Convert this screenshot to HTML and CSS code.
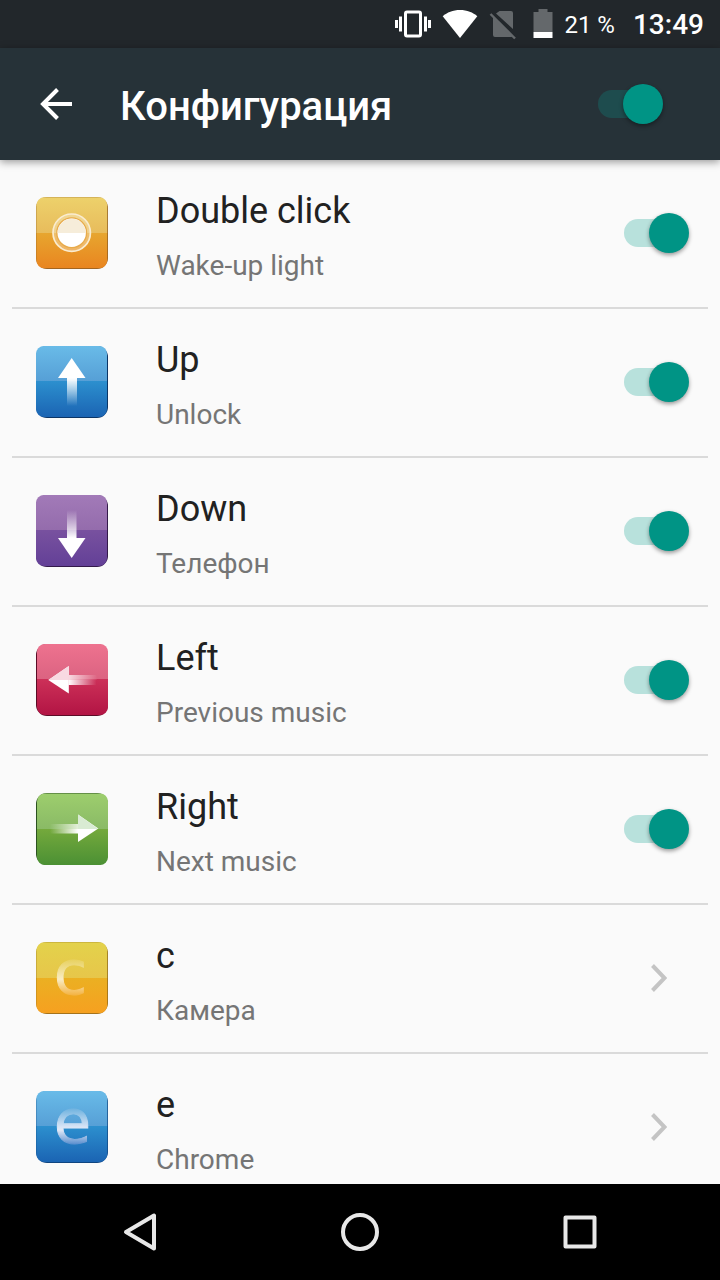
FILE: index.html
```html
<!DOCTYPE html>
<html lang="ru">
  <head>
    <meta charset="UTF-8" />
    <meta name="viewport" content="width=device-width, initial-scale=1" />
    <title>Конфигурация</title>
    <link rel="stylesheet" href="styles.css">
  </head>
  <body>
    <div class="status-bar">
      <svg width="36" height="32" viewBox="0 0 36 32">
        <rect x="10.5" y="4" width="15" height="24" rx="1.5" fill="none" stroke="#fff" stroke-width="3" />
        <path d="M1.500 12v8M5.500 8.500v15M30.500 8.500v15M34.500 12v8" stroke="#fff" stroke-width="3" />
      </svg>
      <svg class="wifi" width="36" height="32" viewBox="0 0 36 32">
        <path d="M18 30L.7 8.200C5 4.500 11 2 18 2s13 2.500 17.300 6.200z" fill="#fff" />
      </svg>
      <svg class="sim" width="28" height="32" viewBox="0 0 28 32">
        <path d="M10.500 3H22q2 0 2 2v16L7 5.500zM4 8.500L24 28q-.8 1-2 1H6q-2 0-2-2z" fill="#64686b" />
        <path d="M1.500 6L26 30.500" stroke="#64686b" stroke-width="2.400" />
      </svg>
      <svg class="battery" width="20" height="32" viewBox="0 0 20 32">
        <path d="M.5 4h5V1h9v3h5v20H.5z" fill="#64686b" />
        <path d="M.5 24h19v6H.5z" fill="#fff" />
      </svg>
      <span class="percent">21 %</span>
      <span class="time">13:49</span>
    </div>

    <header class="toolbar">
      <button class="back" type="button" aria-label="Назад">
        <svg width="32" height="32" viewBox="0 0 32 32" fill="none" stroke="#fff" stroke-width="4">
          <path d="M32 16H4M17.500 1.500L3 16l14.500 14.500" />
        </svg>
      </button>
      <h1><label for="all">Конфигурация</label></h1>
      <input class="switch dark" type="checkbox" id="all" checked />
    </header>

    <main class="list">
      <label class="row">
        <svg class="icon" viewBox="0 0 72 72">
          <defs>
            <linearGradient id="orange" x2="0" y2="1">
              <stop offset="0" stop-color="#edd16b" />
              <stop offset=".5" stop-color="#e8bc5c" />
              <stop offset=".5" stop-color="#e7a62f" />
              <stop offset="1" stop-color="#e98520" />
            </linearGradient>
          </defs>
          <rect width="72" height="72" rx="11" fill="#8c5a20" />
          <rect x=".3" y=".3" width="71" height="71" rx="8" fill="url(#orange)" />
          <circle cx="35.700" cy="35.700" r="18.700" fill="#fff" fill-opacity=".3" stroke="#faecd0" stroke-width="1.700" />
          <circle cx="35.700" cy="35.700" r="15.500" fill="#e8ab4b" />
          <circle cx="35.700" cy="35.700" r="14.200" fill="#fff" />
          <path d="M21.500 36a14.200 14.200 0 0 1 28.400 0z" fill="#f6edda" />
        </svg>
        <span class="text">
          <span class="name">Double click</span>
          <span class="action">Wake-up light</span>
        </span>
        <input class="switch" type="checkbox" checked />
      </label>

      <label class="row">
        <svg class="icon" viewBox="0 0 72 72">
          <defs>
            <linearGradient id="blue" x2="0" y2="1">
              <stop offset="0" stop-color="#69bbe8" />
              <stop offset=".5" stop-color="#569fd6" />
              <stop offset=".5" stop-color="#2c8fce" />
              <stop offset="1" stop-color="#1b64b3" />
            </linearGradient>
            <linearGradient id="fadeDown" x2="0" y2="1">
              <stop offset="0" stop-color="#fff" />
              <stop offset="1" stop-color="#fff" stop-opacity="0" />
            </linearGradient>
          </defs>
          <rect width="72" height="72" rx="11" fill="#0b3566" />
          <rect width="71" height="71" rx="8" fill="url(#blue)" />
          <rect x="31" y="32" width="10" height="28" fill="url(#fadeDown)" />
          <path d="M35.700 12L49.500 32h-27.500z" fill="#fff" />
        </svg>
        <span class="text">
          <span class="name">Up</span>
          <span class="action">Unlock</span>
        </span>
        <input class="switch" type="checkbox" checked />
      </label>

      <label class="row">
        <svg class="icon" viewBox="0 0 72 72">
          <defs>
            <linearGradient id="purple" x2="0" y2="1">
              <stop offset="0" stop-color="#a27ab8" />
              <stop offset=".5" stop-color="#946cac" />
              <stop offset=".5" stop-color="#78519f" />
              <stop offset="1" stop-color="#634097" />
            </linearGradient>
            <linearGradient id="fadeUp" x2="0" y2="1">
              <stop offset="0" stop-color="#fff" stop-opacity="0" />
              <stop offset="1" stop-color="#fff" />
            </linearGradient>
          </defs>
          <rect width="72" height="72" rx="11" fill="#331a4a" />
          <rect width="71" height="71" rx="8" fill="url(#purple)" />
          <rect x="31" y="15" width="9.500" height="28" fill="url(#fadeUp)" />
          <path d="M35.700 63L22 43h27.500z" fill="#fff" />
        </svg>
        <span class="text">
          <span class="name">Down</span>
          <span class="action">Телефон</span>
        </span>
        <input class="switch" type="checkbox" checked />
      </label>

      <label class="row">
        <svg class="icon" viewBox="0 0 72 72">
          <defs>
            <linearGradient id="red" x2="0" y2="1">
              <stop offset="0" stop-color="#ee728f" />
              <stop offset=".5" stop-color="#db6381" />
              <stop offset=".5" stop-color="#cc3058" />
              <stop offset="1" stop-color="#b21444" />
            </linearGradient>
            <linearGradient id="fadeRight">
              <stop offset="0" stop-color="#fff" />
              <stop offset="1" stop-color="#fff" stop-opacity="0" />
            </linearGradient>
          </defs>
          <rect width="72" height="72" rx="11" fill="#5a0c26" />
          <rect x="1" width="71" height="71" rx="8" fill="url(#red)" />
          <rect x="32.500" y="31" width="28" height="10" fill="url(#fadeRight)" />
          <path d="M12.300 36L32.800 22v27.500z" fill="#fff" />
          <path d="M12.300 36L32.800 22v14z" fill="#f8d9e2" />
          <rect x="32.800" y="31" width="28" height="5" fill="#e27290" fill-opacity=".25" />
        </svg>
        <span class="text">
          <span class="name">Left</span>
          <span class="action">Previous music</span>
        </span>
        <input class="switch" type="checkbox" checked />
      </label>

      <label class="row">
        <svg class="icon" viewBox="0 0 72 72">
          <defs>
            <linearGradient id="green" x2="0" y2="1">
              <stop offset="0" stop-color="#9dce6d" />
              <stop offset=".5" stop-color="#8aba66" />
              <stop offset=".5" stop-color="#74a93c" />
              <stop offset="1" stop-color="#4b9034" />
            </linearGradient>
            <linearGradient id="fadeLeft">
              <stop offset="0" stop-color="#fff" stop-opacity="0" />
              <stop offset="1" stop-color="#fff" />
            </linearGradient>
          </defs>
          <rect width="72" height="72" rx="11" fill="#2c5220" />
          <rect x="1" y=".5" width="71" height="71.500" rx="8" fill="url(#green)" />
          <rect x="14" y="31" width="28" height="9.500" fill="url(#fadeLeft)" />
          <path d="M62.300 35.500L42 21.500v27.500z" fill="#fff" />
          <path d="M62.300 36L42 21.500V36z" fill="#d9ebd3" />
          <rect x="14" y="31" width="28" height="5" fill="#8fbf6b" fill-opacity=".25" />
        </svg>
        <span class="text">
          <span class="name">Right</span>
          <span class="action">Next music</span>
        </span>
        <input class="switch" type="checkbox" checked />
      </label>

      <a class="row" href="#c">
        <svg class="icon" viewBox="0 0 72 72">
          <defs>
            <linearGradient id="yellow" x2="0" y2="1">
              <stop offset="0" stop-color="#e3d24b" />
              <stop offset=".5" stop-color="#e7c64a" />
              <stop offset=".5" stop-color="#ebb022" />
              <stop offset="1" stop-color="#f6a020" />
            </linearGradient>
            <linearGradient id="shineYellow" gradientUnits="userSpaceOnUse" x1="0" y1="18" x2="0" y2="53">
              <stop offset="0" stop-color="#e8d262" />
              <stop offset=".55" stop-color="#f9ecc4" />
              <stop offset="1" stop-color="#f4b445" />
            </linearGradient>
          </defs>
          <rect width="72" height="72" rx="11" fill="#8a6418" />
          <rect x=".3" y=".3" width="71" height="71" rx="8" fill="url(#yellow)" />
          <text class="letter" x="18" y="52" fill="url(#shineYellow)" stroke="url(#shineYellow)">c</text>
        </svg>
        <span class="text">
          <span class="name">c</span>
          <span class="action">Камера</span>
        </span>
        <svg class="chevron" width="16" height="28" viewBox="0 0 16 28">
          <path d="M1.500 1.500L13.500 14l-12 12.500" fill="none" stroke="#c4c4c4" stroke-width="4" />
        </svg>
      </a>

      <a class="row" href="#e">
        <svg class="icon" viewBox="0 0 72 72">
          <defs>
            <linearGradient id="shineBlue" gradientUnits="userSpaceOnUse" x1="0" y1="18" x2="0" y2="53">
              <stop offset="0" stop-color="#72b4e0" />
              <stop offset=".5" stop-color="#d6e3f5" />
              <stop offset=".6" stop-color="#e2e9f7" />
              <stop offset="1" stop-color="#5c90cf" />
            </linearGradient>
          </defs>
          <rect width="72" height="72" rx="11" fill="#0f4580" />
          <rect x=".3" width="71" height="71" rx="8" fill="url(#blue)" />
          <text class="letter" x="18" y="52" fill="url(#shineBlue)" stroke="url(#shineBlue)">e</text>
        </svg>
        <span class="text">
          <span class="name">e</span>
          <span class="action">Chrome</span>
        </span>
        <svg class="chevron" width="16" height="28" viewBox="0 0 16 28">
          <path d="M1.500 1.500L13.500 14l-12 12.500" fill="none" stroke="#c4c4c4" stroke-width="4" />
        </svg>
      </a>
    </main>

    <nav class="nav-bar">
      <button type="button" aria-label="Back">
        <svg width="48" height="48" viewBox="0 0 48 48">
          <path d="M10 24L38 7.500v33z" />
        </svg>
      </button>
      <button type="button" aria-label="Home">
        <svg width="48" height="48" viewBox="0 0 48 48">
          <circle cx="24" cy="24" r="17" />
        </svg>
      </button>
      <button type="button" aria-label="Recent apps">
        <svg width="48" height="48" viewBox="0 0 48 48">
          <rect x="9.500" y="9.500" width="29" height="29" />
        </svg>
      </button>
    </nav>
  </body>
</html>
```
FILE: styles.css
```css
* {
  box-sizing: border-box;
}

body {
  margin: 0;
  height: 100vh;
  display: flex;
  flex-direction: column;
  background: #fafafa;
  color: #212121;
  font-family: Roboto, sans-serif;
}

svg {
  display: block;
  flex-shrink: 0;
}

button {
  padding: 0;
  border: 0;
  background: none;
  cursor: pointer;
}

.status-bar {
  display: flex;
  align-items: center;
  justify-content: flex-end;
  flex-shrink: 0;
  height: 48px;
  padding-right: 16px;
  background: #22272b;
  color: #fff;
}

.wifi {
  margin-left: 11px;
}

.sim {
  margin-left: 11px;
}

.battery {
  margin-left: 16px;
}

.percent,
.time {
  padding-top: 2px;
}

.percent {
  margin-left: 11px;
  font-size: 24px;
  line-height: 46px;
}

.time {
  margin-left: 18px;
  font-size: 28px;
  font-weight: 500;
  line-height: 48px;
}

.toolbar {
  display: flex;
  align-items: center;
  flex-shrink: 0;
  height: 112px;
  padding: 0 57px 0 40px;
  background: #263238;
  color: #fff;
  box-shadow: 0 2px 8px rgba(0, 0, 0, 0.4);
  z-index: 1;
}

h1 {
  flex: 1;
  margin: 0 0 0 48px;
  padding-top: 6px;
  font-size: 40px;
  font-weight: 500;
  line-height: 48px;
}

.list {
  flex: 1;
  min-height: 0;
  padding: 0 12px;
  overflow-y: auto;
  scrollbar-width: none;
}

.row {
  display: flex;
  align-items: center;
  height: 149px;
  padding: 0 19px 1px 24px;
  border-bottom: 2px solid #dadada;
  color: inherit;
  text-decoration: none;
}

.icon {
  width: 72px;
  height: 72px;
  overflow: visible;
}

.letter {
  font-family: "DejaVu Sans", sans-serif;
  font-size: 60px;
  stroke-width: 1px;
}

.text {
  flex: 1;
  margin-left: 48px;
  padding-top: 8px;
}

.name,
.action {
  display: block;
}

.name {
  font-size: 36px;
  line-height: 42px;
}

.action {
  margin-top: 16px;
  color: #757575;
  font-size: 28px;
  line-height: 36px;
}

.chevron {
  margin-right: 22px;
}

.switch {
  appearance: none;
  display: flex;
  align-items: center;
  flex-shrink: 0;
  width: 65px;
  height: 28px;
  margin: 0;
  border-radius: 14px;
  background: linear-gradient(#ccc, #ccc) no-repeat left / 54px 28px;
}

.switch::before {
  content: "";
  width: 40px;
  height: 40px;
  border-radius: 50%;
  background: #f1f1f1;
  box-shadow: 0 2px 4px rgba(0, 0, 0, 0.4);
}

.switch:checked {
  background-image: linear-gradient(#b8e1dc, #b8e1dc);
}

.switch.dark:checked {
  background-image: linear-gradient(#1e4c4e, #1e4c4e);
}

.switch:checked::before {
  margin-left: auto;
  background: #009485;
}

.nav-bar {
  display: grid;
  grid-template-columns: repeat(3, 1fr);
  flex-shrink: 0;
  height: 96px;
  padding: 0 30px;
  background: #000;
}

.nav-bar button {
  display: flex;
  align-items: center;
  justify-content: center;
}

.nav-bar svg {
  fill: none;
  stroke: #e8e8e8;
  stroke-width: 4px;
  stroke-linejoin: round;
}
```
